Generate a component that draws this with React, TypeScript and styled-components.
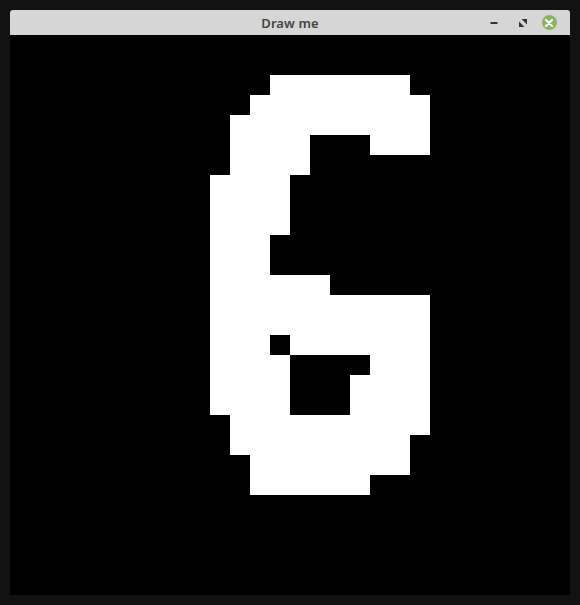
import React from "react";
import styled, { createGlobalStyle } from "styled-components";

const Global = createGlobalStyle`
  html, body { margin: 0; padding: 0; background: #121212; }
  body { font-family: "Noto Sans", "DejaVu Sans", sans-serif; }
`;

const Desktop = styled.div`
  width: 580px;
  height: 605px;
  padding: 10px 0 0 10px;
  box-sizing: border-box;
  background: #121212;
`;

const Window = styled.div`
  width: 560px;
  display: flex;
  flex-direction: column;
`;

const TitleBar = styled.div`
  height: 25px;
  background: #d6d6d6;
  border-radius: 3px 3px 0 0;
  display: grid;
  grid-template-columns: 1fr auto 1fr;
  align-items: center;
`;

const Title = styled.div`
  grid-column: 2;
  font-size: 13px;
  font-weight: 600;
  color: #454545;
  letter-spacing: 0.1px;
  padding-top: 1px;
`;

const Controls = styled.div`
  grid-column: 3;
  justify-self: end;
  display: flex;
  align-items: center;
  padding-right: 9px;
`;

const CtrlButton = styled.div<{ $w?: number }>`
  width: ${(p) => p.$w ?? 29}px;
  height: 25px;
  display: flex;
  align-items: center;
  justify-content: center;
`;

const CloseCircle = styled.div`
  width: 15px;
  height: 15px;
  border-radius: 50%;
  background: #8db263;
  display: flex;
  align-items: center;
  justify-content: center;
`;

const Canvas = styled.div`
  width: 560px;
  height: 560px;
  background: #000;
  display: grid;
  grid-template-columns: repeat(28, 20px);
  grid-template-rows: repeat(28, 20px);
`;

const Cell = styled.div<{ $on: boolean }>`
  background: ${(p) => (p.$on ? "#ffffff" : "#000000")};
`;

// rows: list of [start, end] inclusive column ranges
const rows: Record<number, [number, number][]> = {
  2: [[13, 19]],
  3: [[12, 20]],
  4: [[11, 20]],
  5: [[11, 14], [18, 20]],
  6: [[11, 14]],
  7: [[10, 13]],
  8: [[10, 13]],
  9: [[10, 13]],
  10: [[10, 12]],
  11: [[10, 12]],
  12: [[10, 15]],
  13: [[10, 20]],
  14: [[10, 20]],
  15: [[10, 12], [14, 20]],
  16: [[10, 13], [18, 20]],
  17: [[10, 13], [17, 20]],
  18: [[10, 13], [17, 20]],
  19: [[11, 20]],
  20: [[11, 19]],
  21: [[12, 19]],
  22: [[12, 17]],
};

const isOn = (r: number, c: number) =>
  (rows[r] || []).some(([a, b]) => c >= a && c <= b);

export default function App() {
  const cells = [];
  for (let r = 0; r < 28; r++) {
    for (let c = 0; c < 28; c++) {
      cells.push(<Cell key={`${r}-${c}`} $on={isOn(r, c)} />);
    }
  }
  return (
    <>
      <Global />
      <Desktop>
        <Window>
          <TitleBar>
            <Title>Draw me</Title>
            <Controls>
              <CtrlButton>
                <svg width="8" height="8" viewBox="0 0 8 8">
                  <rect x="0.5" y="3" width="7" height="2" fill="#333" />
                </svg>
              </CtrlButton>
              <CtrlButton>
                <svg width="8" height="8" viewBox="0 0 8 8">
                  <polygon points="2.5,0 8,0 8,5.5" fill="#333" />
                  <polygon points="0,2.5 0,8 5.5,8" fill="#333" />
                </svg>
              </CtrlButton>
              <CtrlButton $w={24}>
                <CloseCircle>
                  <svg width="8" height="8" viewBox="0 0 8 8">
                    <path d="M1 1 L7 7 M7 1 L1 7" stroke="#fff" strokeWidth="2" strokeLinecap="round" />
                  </svg>
                </CloseCircle>
              </CtrlButton>
            </Controls>
          </TitleBar>
          <Canvas>{cells}</Canvas>
        </Window>
      </Desktop>
    </>
  );
}
